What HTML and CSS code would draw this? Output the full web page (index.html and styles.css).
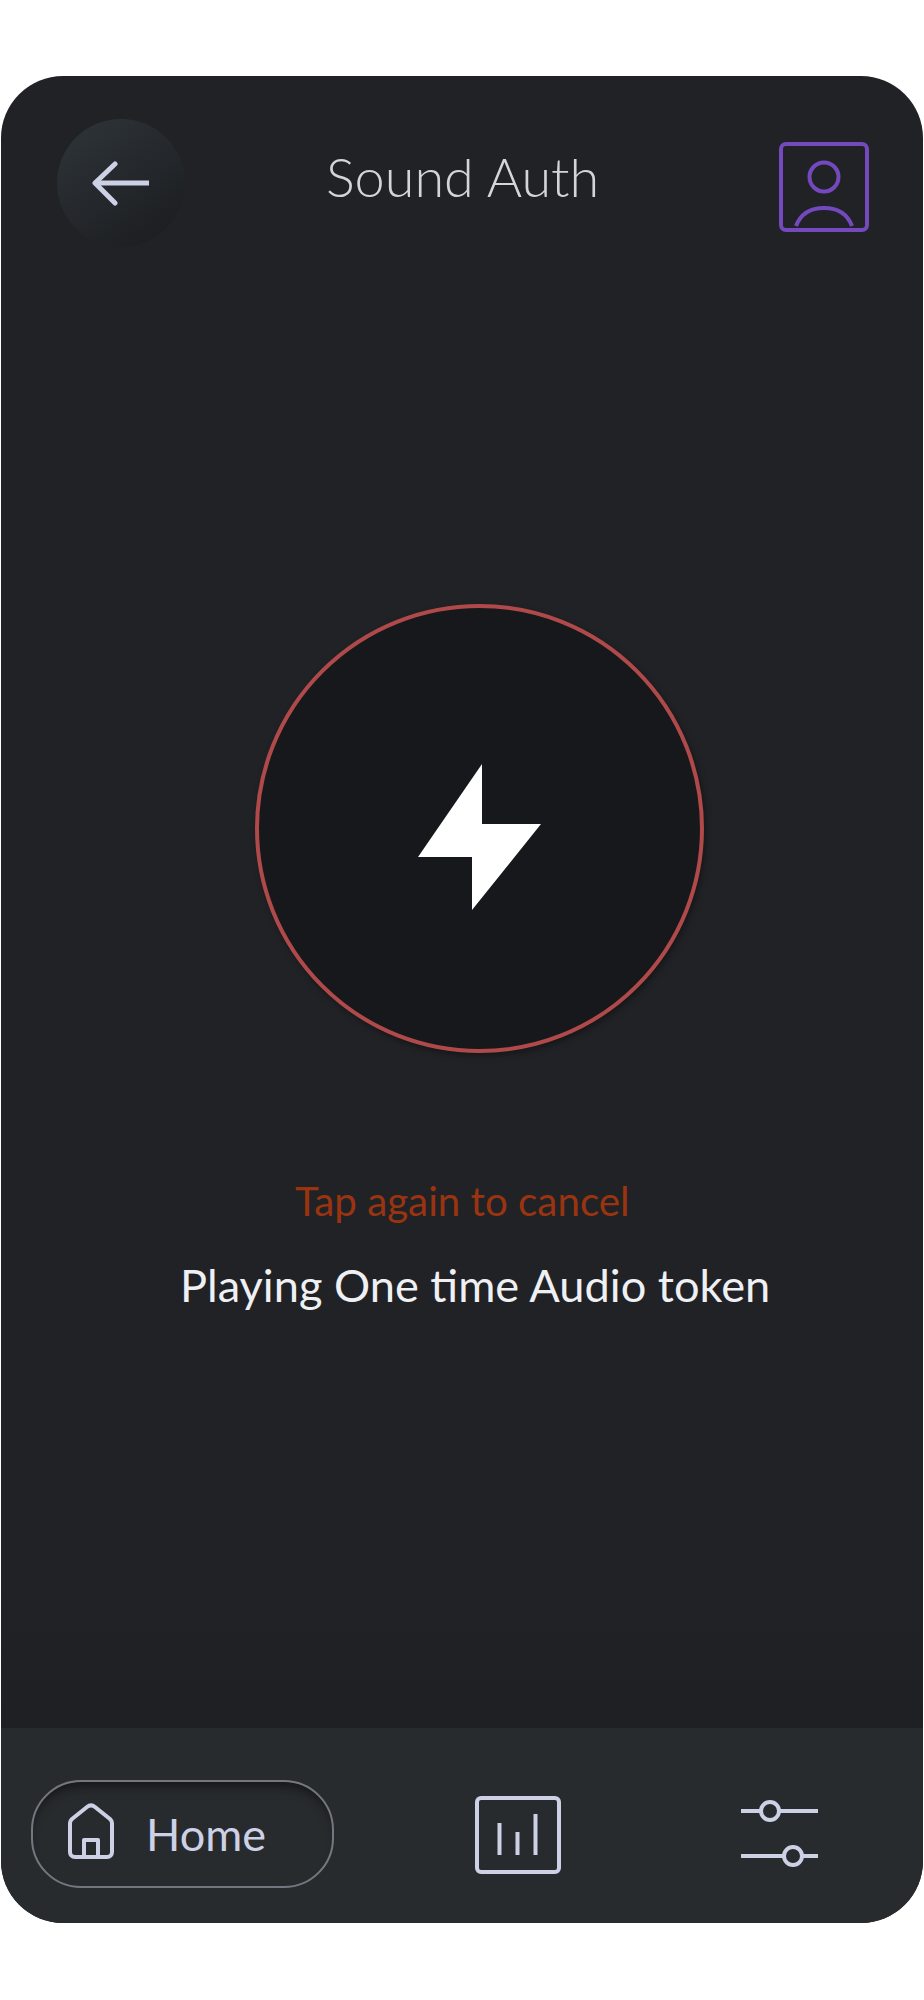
FILE: index.html
```html
<!DOCTYPE html>
<html lang="en">

<head>
    <meta charset="UTF-8" />
    <meta name="viewport" content="width=device-width, initial-scale=1" />
    <title>Sound Auth</title>
    <link rel="stylesheet" href="styles.css">
</head>

<body>

    <div class="phone">

        <header class="topBar">
            <button class="backBtn" aria-label="Back">
                <svg width="60" height="46" viewBox="0 0 60 46" fill="none" stroke="#cdd1e6" stroke-width="5">
                    <path d="M59 23H5" />
                    <path d="M25 4L5 23L25 43" stroke-linecap="round" stroke-linejoin="round" />
                </svg>
            </button>
            <h1 class="title">Sound Auth</h1>
            <svg class="profileIcon" width="90" height="90" viewBox="0 0 90 90" fill="none" stroke="#7449bd" stroke-width="4">
                <rect x="2" y="2" width="86" height="86" rx="5" />
                <circle cx="45" cy="35" r="14.5" />
                <path d="M17 84C22 71 33 66 45 66C57 66 68 71 73 84" />
            </svg>
        </header>

        <main class="content">
            <button class="tokenBtn" aria-label="Cancel">
                <svg width="124" height="148" viewBox="0 0 124 148" fill="#ffffff">
                    <path d="M64 0V60H123L54 146V93H0Z" />
                </svg>
            </button>
            <p class="cancelText">Tap again to cancel</p>
            <p class="statusText">Playing One time Audio token</p>
        </main>

        <nav class="bottomNav">
            <a class="homePill">
                <svg class="homeIcon" width="48" height="56" viewBox="0 0 48 56" fill="none" stroke="#cdd1e6" stroke-width="4" stroke-linejoin="round">
                    <path d="M3 20C3 18 4 17 5 16L20 4C22.500 2 25.500 2 28 4L43 16C44 17 45 18 45 20V49C45 52 43 54 40 54H8C5 54 3 52 3 49Z" />
                    <path d="M17 54V37H31V54" />
                </svg>
                <span>Home</span>
            </a>
            <svg class="chartIcon" width="86" height="78" viewBox="0 0 86 78" fill="none" stroke="#cdd1e6" stroke-width="4">
                <rect x="2" y="2" width="82" height="74" rx="4" />
                <path d="M24.500 27V59M42.500 36V59M60.500 18V59" />
            </svg>
            <svg class="slidersIcon" width="78" height="70" viewBox="0 0 78 70" fill="none" stroke="#cdd1e6" stroke-width="4">
                <path d="M0 11H20M38 11H77M0 56H43M61 56H77" />
                <circle cx="29" cy="11" r="9" />
                <circle cx="52" cy="56" r="9" />
            </svg>
        </nav>

    </div>

</body>

</html>
```

FILE: styles.css
```css
* {
    box-sizing: border-box;
}

body {
    margin: 0;
    padding: 76px 1px 0;
    background: #ffffff;
    font-family: "Lato", "Liberation Sans", sans-serif;
}

.phone {
    display: flex;
    flex-direction: column;
    width: 922px;
    height: 1847px;
    border-radius: 62px;
    overflow: hidden;
    background: #212226;
}

/* top bar */
.topBar {
    display: flex;
    align-items: flex-start;
    padding: 43px 54px 0 56px;
}

.backBtn {
    display: flex;
    align-items: center;
    justify-content: center;
    width: 128px;
    height: 128px;
    padding: 0 2px 0 0;
    border: none;
    border-radius: 50%;
    background: linear-gradient(145deg, #2f353a 0%, #1d1f22 85%);
}

.title {
    margin: 27px 0 0 141px;
    color: #d4d5da;
    font-size: 54px;
    font-weight: 300;
    line-height: 62px;
}

.profileIcon {
    margin: 23px 0 0 auto;
}

/* centre */
.content {
    flex: 1;
    display: flex;
    flex-direction: column;
    align-items: flex-start;
    background: linear-gradient(to bottom, #212226 90%, #1f2023 100%);
}

.tokenBtn {
    display: flex;
    align-items: center;
    justify-content: center;
    width: 449px;
    height: 449px;
    margin: 357px 0 0 254px;
    padding: 18px 0 0 0;
    border: 4px solid #b04a4a;
    border-radius: 50%;
    background: #17181c;
    box-shadow: 2px 3px 6px rgba(0, 0, 0, 0.35);
}

.cancelText {
    margin: 125px 0 0 294px;
    color: #9a3410;
    font-size: 40.3px;
    line-height: 46px;
}

.statusText {
    margin: 36px 0 0 179px;
    color: #eef0f3;
    font-size: 45.2px;
    line-height: 50px;
}

/* bottom nav */
.bottomNav {
    display: flex;
    align-items: flex-start;
    height: 195px;
    padding: 52px 0 0 30px;
    background: #282b2e;
}

.homePill {
    display: flex;
    align-items: center;
    gap: 31px;
    width: 303px;
    height: 108px;
    padding-left: 34px;
    border: 2px solid #74777f;
    border-radius: 50px;
    color: #cdd1e6;
    font-size: 45px;
    box-shadow: inset 0 10px 12px -6px rgba(0, 0, 0, 0.55);
}

.homeIcon {
    margin-bottom: 7px;
}

.chartIcon {
    margin: 16px 0 0 141px;
}

.slidersIcon {
    margin: 20px 0 0 180px;
}
```
